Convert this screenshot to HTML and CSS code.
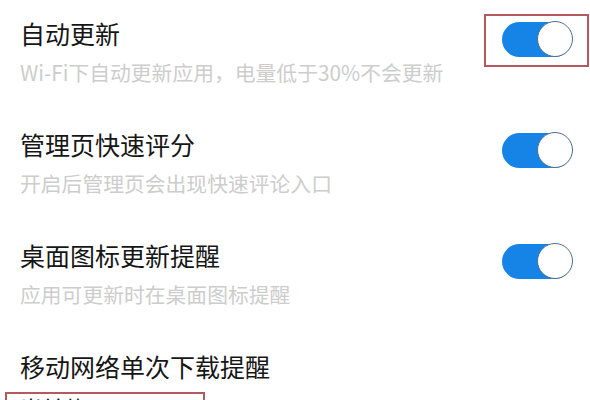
FILE: index.html
```html
<!DOCTYPE html>
<html lang="zh-CN">
<head>
<meta charset="utf-8">
<title>设置</title>
<link rel="stylesheet" href="styles.css">
</head>
<body>
<div class="list">
  <div class="row">
    <div class="text">
      <div class="title">自动更新</div>
      <div class="sub">Wi-Fi下自动更新应用，电量低于30%不会更新</div>
    </div>
    <div class="switch marked"><span class="knob"></span></div>
  </div>
  <div class="row">
    <div class="text">
      <div class="title">管理页快速评分</div>
      <div class="sub">开启后管理页会出现快速评论入口</div>
    </div>
    <div class="switch"><span class="knob"></span></div>
  </div>
  <div class="row">
    <div class="text">
      <div class="title">桌面图标更新提醒</div>
      <div class="sub">应用可更新时在桌面图标提醒</div>
    </div>
    <div class="switch"><span class="knob"></span></div>
  </div>
  <div class="row">
    <div class="text">
      <div class="title">移动网络单次下载提醒</div>
      <div class="value">当前值：0.00M</div>
    </div>
  </div>
</div>
</body>
</html>
```
FILE: styles.css
```css
html, body {
  margin: 0;
  padding: 0;
  background: #ffffff;
  overflow: hidden;
}
body {
  width: 590px;
  height: 400px;
  font-family: "Noto Sans CJK SC", "Noto Sans", sans-serif;
}
.list {
  display: flex;
  flex-direction: column;
}
.row {
  display: flex;
  justify-content: space-between;
  align-items: flex-start;
  height: 111px;
  padding: 0 18px 0 20px;
  box-sizing: border-box;
  flex-shrink: 0;
}
.text {
  display: flex;
  flex-direction: column;
  align-items: flex-start;
}
.title {
  font-size: 25px;
  line-height: 34px;
  margin-top: 16px;
  color: #161616;
}
.sub {
  font-size: 20.8px;
  line-height: 28px;
  margin-top: 8px;
  color: #cdcdcd;
  white-space: nowrap;
}
.value {
  margin-top: 9px;
  margin-left: -15px;
  width: 200px;
  box-sizing: border-box;
  padding: 0 13px;
  border: 2px solid #b45a5f;
  font-size: 22px;
  line-height: 26px;
  color: #161616;
  white-space: nowrap;
}
.switch {
  position: relative;
  margin-top: 22px;
  width: 70px;
  height: 35px;
  border-radius: 18px;
  background: #1683e6;
  flex-shrink: 0;
}
.knob {
  position: absolute;
  right: -1px;
  top: -1px;
  width: 34px;
  height: 34px;
  border-radius: 50%;
  background: #ffffff;
  border: 1.5px solid #4c6d8b;
}
.marked::after {
  content: "";
  position: absolute;
  left: -18px;
  top: -8px;
  width: 101px;
  height: 49px;
  border: 2px solid #b45a5f;
}
```
